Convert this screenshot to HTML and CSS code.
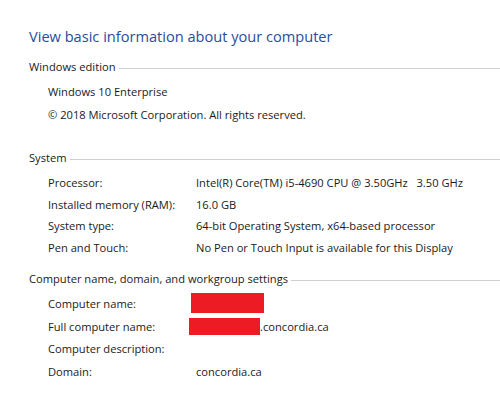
FILE: index.html
```html
<!DOCTYPE html>
<html>
<head>
<meta charset="utf-8">
<link rel="stylesheet" href="styles.css">
</head>
<body>
<div class="page">
  <h1 class="title">View basic information about your computer</h1>

  <section class="group group-edition">
    <div class="group-head"><span class="group-label">Windows edition</span><span class="rule"></span></div>
    <div class="rows rows-edition">
      <div class="row"><span class="single">Windows 10 Enterprise</span></div>
      <div class="row"><span class="single">© 2018 Microsoft Corporation. All rights reserved.</span></div>
    </div>
  </section>

  <section class="group group-system">
    <div class="group-head"><span class="group-label">System</span><span class="rule"></span></div>
    <div class="rows rows-system">
      <div class="row"><span class="key">Processor:</span><span class="val">Intel(R) Core(TM) i5-4690 CPU @ 3.50GHz&nbsp;&nbsp; 3.50 GHz</span></div>
      <div class="row"><span class="key">Installed memory (RAM):</span><span class="val">16.0 GB</span></div>
      <div class="row"><span class="key">System type:</span><span class="val">64-bit Operating System, x64-based processor</span></div>
      <div class="row"><span class="key">Pen and Touch:</span><span class="val">No Pen or Touch Input is available for this Display</span></div>
    </div>
  </section>

  <section class="group group-name">
    <div class="group-head"><span class="group-label">Computer name, domain, and workgroup settings</span><span class="rule"></span></div>
    <div class="rows rows-name">
      <div class="row"><span class="key">Computer name:</span><span class="val"><span class="redact redact-1"></span></span></div>
      <div class="row"><span class="key">Full computer name:</span><span class="val"><span class="redact redact-2"></span>.concordia.ca</span></div>
      <div class="row"><span class="key">Computer description:</span><span class="val"></span></div>
      <div class="row"><span class="key">Domain:</span><span class="val">concordia.ca</span></div>
    </div>
  </section>
</div>
</body>
</html>
```

FILE: styles.css
```css
html, body {
  margin: 0;
  padding: 0;
  background: #ffffff;
}

body {
  font-family: "Open Sans", "Noto Sans", "Liberation Sans", sans-serif;
  font-size: 11.15px;
  color: #1a1a1a;
  width: 500px;
  height: 394px;
  overflow: hidden;
}

.page {
  padding: 26px 0 0 29px;
}

.title {
  margin: 0;
  font-size: 14.6px;
  font-weight: 400;
  line-height: 20px;
  color: #2a4c9e;
  letter-spacing: 0;
}

.group-head {
  display: flex;
  align-items: center;
  height: 16px;
  line-height: 16px;
}

.group-label {
  white-space: nowrap;
  color: #1a1a1a;
}

.rule {
  flex: 1;
  height: 1px;
  background: #cfcfcf;
  margin: 2px 0 0 3px;
}

.group-edition { margin-top: 13px; }
.group-system { margin-top: 24px; }
.group-name { margin-top: 13px; }

.rows {
  padding-left: 19px;
}

.rows-edition { margin-top: 5px; }
.rows-edition .row { height: 23px; }

.rows-system { margin-top: 6px; }
.rows-system .row { height: 21.5px; }

.rows-name { margin-top: 5px; }
.rows-name .row { height: 22.7px; }

.row {
  display: flex;
  align-items: center;
  white-space: nowrap;
}

.key {
  width: 148px;
  flex: none;
}

.val {
  display: flex;
  align-items: center;
}

.redact {
  display: inline-block;
  background: #ed1c24;
}

.redact-1 {
  width: 73px;
  height: 20px;
  margin-left: -5px;
}

.redact-2 {
  width: 71px;
  height: 17px;
  margin-left: -7px;
  margin-top: 1px;
}
```
